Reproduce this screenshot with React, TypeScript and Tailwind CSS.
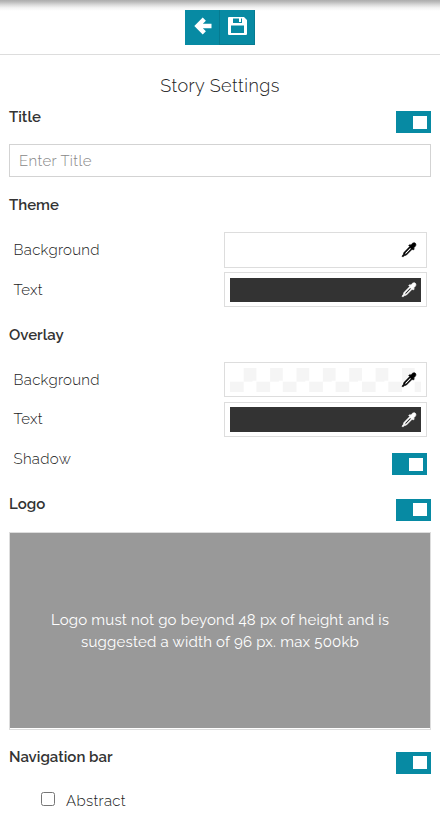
import React from "react";

function Toggle({ knob = "pt-1" }: { knob?: string }) {
  return (
    <button type="button" aria-label="toggle" className={"flex h-[22px] w-[35px] shrink-0 items-start justify-end bg-[#078aa3] pr-1 " + knob}>
      <span className="h-[13px] w-[14px] bg-white" />
    </button>
  );
}

function Dropper({ className }: { className: string }) {
  return (
    <svg viewBox="0 0 16 16" className={"h-4 w-4 " + className} fill="currentColor" stroke="currentColor" strokeWidth="0.6">
      <path d="M11.2 1.500c1-.9 2.200-1 3-.4 1 .9.9 2.300.1 3.200L12.600 6l.8.9-1.200 1.200-1-.9-5.800 5.900-2.500.7-1 1.300-1-1 1.200-1.200.8-2.400 5.800-5.900-1-1 1.200-1.200 1 .8zM9.100 5.700l-5 5.200-.4 1.500 1.400-.4 5.100-5.300z" />
    </svg>
  );
}

function Swatch({ box, fill, icon }: { box: string; fill: string; icon: string }) {
  return (
    <div className={"w-[203px] border border-[#ddd] px-[5px] " + box}>
      <div className={"flex h-full items-center justify-end pr-1 " + fill}>
        <Dropper className={icon} />
      </div>
    </div>
  );
}

const label = "text-[15px] leading-5 font-light whitespace-nowrap tracking-[0.32px] text-[#222]";
const heading = "text-[15px] leading-5 font-semibold text-[#333] whitespace-nowrap";
const checker =
  "bg-[conic-gradient(#f5f5f5_25%,white_0_50%,#f5f5f5_0_75%,white_0)] bg-[length:26.4px_26.4px]";

export default function App() {
  return (
    <main className="h-[825px] w-[440px] overflow-hidden bg-white font-['Raleway','Lato',sans-serif] text-[#333]">
      <header className="flex h-[55px] justify-center border-b border-[#ddd] bg-[linear-gradient(to_bottom,#adadad_0,#bcbcbc_2px,#dcdcdc_5px,#f5f5f5_8px,#fff_11px)] pt-[10px]">
        <div className="flex h-[35px] w-[70px] bg-[#078aa3] text-white">
          <button type="button" aria-label="Back" className="flex w-[35px] justify-center border-r border-[#067b91] pt-[7px] pl-[2px]">
            <svg viewBox="0 0 18 18" className="h-[18px] w-[18px]" fill="none" stroke="currentColor" strokeWidth="4.5">
              <path d="M10.300 2.200 3.500 9l6.800 6.800M4 9H17.500" />
            </svg>
          </button>
          <button type="button" aria-label="Save" className="flex w-[35px] justify-center border-r border-b border-[#067b91] pt-[7px] pl-px">
            <svg viewBox="0 0 19 18" className="h-[18px] w-[19px]">
              <path fill="currentColor" fillRule="evenodd" d="M1 0h15l3 3v14a1 1 0 0 1-1 1H1a1 1 0 0 1-1-1V1a1 1 0 0 1 1-1zm4 1.500v4.500h9V1.500h-1v3.500h-2V1.500zm-2 7v7.500h13V8.500z" />
            </svg>
          </button>
        </div>
      </header>

      <h1 className="mt-[19px] text-center text-[18px] leading-6 font-light tracking-[0.42px] text-[#222]">Story Settings</h1>

      <section className="px-[9px]">
        <div className="mt-[9px] flex h-[37px] justify-between">
          <h2 className={heading}>Title</h2>
          <div className="pt-1"><Toggle knob="pt-[5px]" /></div>
        </div>
        <input placeholder="Enter Title" className="block h-[33px] w-full border border-[#d3d3d3] px-[9px] text-[15px] font-light tracking-[0.36px] placeholder:text-[#888]" />
      </section>

      <section className="px-[9px] pt-[18px]">
        <h2 className={heading}>Theme</h2>
        <div className="mt-[17px] flex h-10 justify-between pr-1 pl-[4.5px]">
          <span className={label + " pt-[8px]"}>Background</span>
          <Swatch box="h-9 py-[5px]" fill="bg-white" icon="text-black" />
        </div>
        <div className="flex h-[35px] justify-between pr-1 pl-[4.5px]">
          <span className={label + " pt-[8px]"}>Text</span>
          <Swatch box="h-[35px] pt-[5px] pb-1" fill="bg-[#333]" icon="text-white" />
        </div>
      </section>

      <section className="px-[9px] pt-[18px]">
        <h2 className={heading}>Overlay</h2>
        <div className="mt-[17px] flex h-10 justify-between pr-1 pl-[4.5px]">
          <span className={label + " pt-[8px]"}>Background</span>
          <Swatch box="h-[35px] pt-[5px] pb-1" fill={checker} icon="text-black" />
        </div>
        <div className="flex h-[51px] justify-between pr-1 pl-[4.5px]">
          <span className={label + " pt-[7px]"}>Text</span>
          <Swatch box="h-[35px] py-1" fill="bg-[#333]" icon="text-white" />
        </div>
        <div className="flex h-[22px] justify-between pr-1 pl-[4.5px]">
          <span className={label + " -mt-1"}>Shadow</span>
          <Toggle knob="pt-[5px]" />
        </div>
      </section>

      <section className="px-[9px] pt-[19px]">
        <div className="flex h-[38px] justify-between">
          <h2 className={heading}>Logo</h2>
          <div className="pt-[5px]"><Toggle /></div>
        </div>
        <div className="flex h-[198px] border border-[#ddd] pb-px">
          <div className="flex w-full flex-col items-center justify-center bg-[#999] text-[15px] leading-[22px] font-normal whitespace-nowrap text-white">
            <p className="tracking-[0.18px]">Logo must not go beyond 48 px of height and is</p>
            <p className="tracking-[0.2px]">suggested a width of 96 px. max 500kb</p>
          </div>
        </div>
      </section>

      <section className="px-[9px] pt-[17px]">
        <div className="flex h-[45px] justify-between">
          <h2 className={heading}>Navigation bar</h2>
          <div className="pt-[5px]"><Toggle /></div>
        </div>
        <label className="flex pl-8">
          <input type="checkbox" className="h-[14px] w-[14px] appearance-none rounded-[2.5px] border border-[#767676] bg-white" />
          <span className={label + " -mt-px ml-[11px]"}>Abstract</span>
        </label>
      </section>
    </main>
  );
}
